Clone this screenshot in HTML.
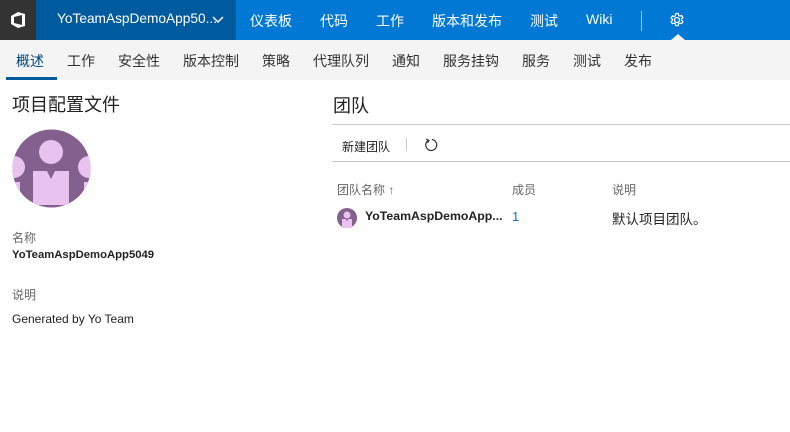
<!DOCTYPE html><html><head><style>
body{margin:0;width:790px;height:432px;background:#fff;font-family:"Liberation Sans","Noto Sans CJK SC",sans-serif;position:relative;overflow:hidden;color:#222}
.a{position:absolute;white-space:nowrap}
.top{position:absolute;left:0;top:0;width:790px;height:40px;background:#0078d4}
.nav{font-size:14px;color:#fff;top:11px}
.sub{font-size:14px;color:#333;top:51px}
.g{color:#666;font-size:12px}
</style></head><body>
<div class="top"></div>
<div class="a" style="left:0;top:0;width:36px;height:40px;background:#333"></div>
<svg class="a" style="left:8px;top:11px" width="20" height="18" viewBox="0 0 20 18"><path d="M3 5 L10 1 L17 3 L17 15 L10 17 L3 13 Z M6 6 V12 L14 14 V4 Z" fill="#fff" fill-rule="evenodd"/></svg>
<div class="a" style="left:36px;top:0;width:200px;height:40px;background:#005a9e"></div>
<div class="a nav" style="left:57px;font-size:13.7px">YoTeamAspDemoApp50...</div>
<svg class="a" style="left:212px;top:16px" width="12" height="8"><path d="M1 1 L6 6 L11 1" stroke="#fff" stroke-width="1.5" fill="none"/></svg>
<div class="a nav" style="left:250px">仪表板</div>
<div class="a nav" style="left:320px">代码</div>
<div class="a nav" style="left:376px">工作</div>
<div class="a nav" style="left:432px">版本和发布</div>
<div class="a nav" style="left:530px">测试</div>
<div class="a nav" style="left:586px">Wiki</div>
<div class="a" style="left:641px;top:11px;width:1px;height:20px;background:#9cc6ee"></div>
<svg class="a" style="left:669px;top:12px" width="16" height="16" viewBox="0 0 16 16"><circle cx="8" cy="8" r="2.5" stroke="#fff" stroke-width="1.3" fill="none"/><path d="M6.8 1.5h2.4l.4 1.8 1.4.8 1.7-.6 1.2 2.1-1.3 1.2v1.6l1.3 1.2-1.2 2.1-1.7-.6-1.4.8-.4 1.8H6.8l-.4-1.8-1.4-.8-1.7.6-1.2-2.1 1.3-1.2V7.2L2.1 6l1.2-2.1 1.7.6 1.4-.8z" stroke="#fff" stroke-width="1.2" fill="none"/></svg>
<svg class="a" style="left:671px;top:34px" width="14" height="6"><path d="M0 6 L7 0 L14 6Z" fill="#f4f4f4"/></svg>
<div class="a" style="left:0;top:40px;width:790px;height:40px;background:#f4f4f4"></div>
<div class="a" style="left:6px;top:77px;width:51px;height:3px;background:#005a9e"></div>
<div class="a sub" style="left:16px;color:#004578">概述</div>
<div class="a sub" style="left:67px">工作</div>
<div class="a sub" style="left:118px">安全性</div>
<div class="a sub" style="left:183px">版本控制</div>
<div class="a sub" style="left:262px">策略</div>
<div class="a sub" style="left:313px">代理队列</div>
<div class="a sub" style="left:392px">通知</div>
<div class="a sub" style="left:443px">服务挂钩</div>
<div class="a sub" style="left:522px">服务</div>
<div class="a sub" style="left:573px">测试</div>
<div class="a sub" style="left:624px">发布</div>
<div class="a" style="left:12px;top:91px;font-size:18px">项目配置文件</div>
<svg class="a" style="left:12px;top:129px" width="79" height="79" viewBox="0 0 79 79"><defs><clipPath id="c"><circle cx="39.5" cy="39.5" r="39"/></clipPath></defs><circle cx="39.5" cy="39.5" r="39" fill="#84608e"/><g clip-path="url(#c)" fill="#e9c3f0"><circle cx="39" cy="23" r="12"/><path d="M21 42 H35 L39 50 L43 42 H57 V76 H21Z"/><circle cx="2" cy="38" r="11"/><rect x="0" y="53" width="8" height="25"/><circle cx="77" cy="38" r="11"/><rect x="72" y="53" width="8" height="25"/></g></svg>
<div class="a g" style="left:12px;top:229px">名称</div>
<div class="a" style="left:12px;top:249px;font-size:11.3px;font-weight:bold">YoTeamAspDemoApp5049</div>
<div class="a g" style="left:12px;top:286px">说明</div>
<div class="a" style="left:12px;top:312px;font-size:12px">Generated by Yo Team</div>
<div class="a" style="left:333px;top:92px;font-size:18px">团队</div>
<div class="a" style="left:332px;top:124px;width:458px;height:1px;background:#c8c8c8"></div>
<div class="a" style="left:342px;top:138px;font-size:12px">新建团队</div>
<div class="a" style="left:406px;top:138px;width:1px;height:13px;background:#ccc"></div>
<svg class="a" style="left:423px;top:137px" width="16" height="16" viewBox="0 0 16 16"><path d="M5 3.5 A5.5 5.5 0 1 0 9 2.5" stroke="#333" stroke-width="1.2" fill="none"/><path d="M3 2 L6 3.5 L4.5 6" stroke="#333" stroke-width="1.2" fill="none"/></svg>
<div class="a" style="left:332px;top:161px;width:458px;height:1px;background:#c8c8c8"></div>
<div class="a g" style="left:337px;top:181px">团队名称 ↑</div>
<div class="a g" style="left:512px;top:181px">成员</div>
<div class="a g" style="left:612px;top:181px">说明</div>
<svg class="a" style="left:337px;top:208px" width="20" height="20" viewBox="0 0 20 20"><circle cx="10" cy="10" r="10" fill="#84608e"/><circle cx="10" cy="7" r="3.5" fill="#e9c3f0"/><path d="M5 11H8.5L10 13L11.5 11H15V20H5Z" fill="#e9c3f0"/></svg>
<div class="a" style="left:365px;top:209px;font-size:12.3px;font-weight:bold">YoTeamAspDemoApp...</div>
<div class="a" style="left:512px;top:209px;font-size:13px;color:#106ebe">1</div>
<div class="a" style="left:612px;top:208px;font-size:13.5px">默认项目团队。</div>
</body></html>
